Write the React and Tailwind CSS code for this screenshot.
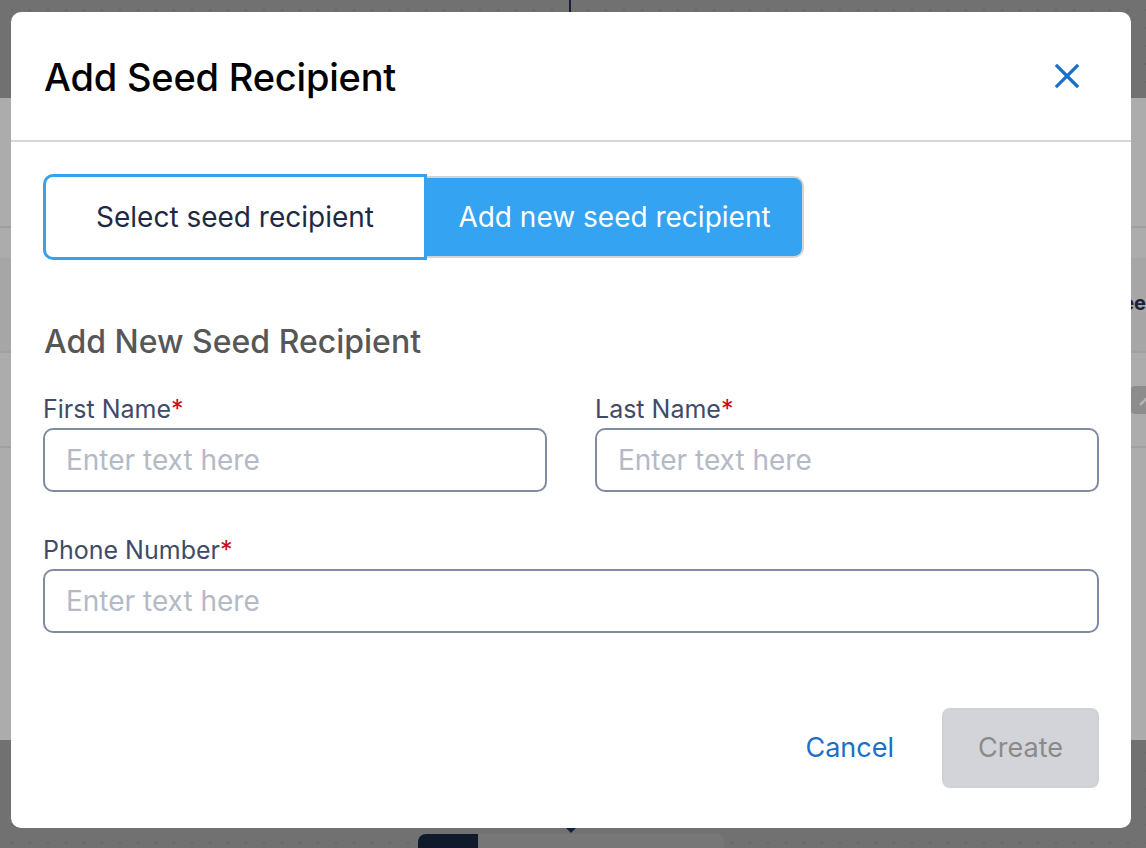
import React from 'react';

const inter = { fontFamily: 'Inter, "Noto Sans", sans-serif' };

function Field({ label, className = '' }) {
  return (
    <div className={`flex flex-col ${className}`}>
      <label className="text-[25px] leading-[30px] text-[#3f4b68]">
        {label}
        <span className="text-[#d0021b]">*</span>
      </label>
      <input
        placeholder="Enter text here"
        className="mt-[4px] h-[64px] w-full rounded-[10px] border-2 border-[#818ba0] bg-white px-[21px] text-[28px] text-[#1e2a44] outline-none placeholder:text-[#b3bac6]"
      />
    </div>
  );
}

export default function App() {
  return (
    <div className="relative h-[848px] w-[1146px] overflow-hidden" style={inter}>
      {/* page behind the overlay */}
      <div className="flex h-full flex-col">
        <div className="h-[98px] bg-[#717171] bg-[radial-gradient(circle,#676767_1.2px,transparent_1.5px)] bg-[size:18px_18px] bg-[position:3px_1px]"></div>
        <div className="flex flex-1 flex-col bg-[#acacac]">
          <div className="h-[130px] border-b-2 border-[#a0a0a0]"></div>
          <div className="h-[30px]"></div>
          <div className="flex h-[95px] items-center justify-end border-b-2 border-[#a0a0a0] bg-[#a6a6a6] pb-[4px]">
            <span className="text-[20px] font-bold leading-none text-[#1a2236]">ee</span>
          </div>
          <div className="flex h-[95px] items-center justify-end border-b-2 border-[#a0a0a0]">
            <div className="mr-[-14px] flex h-[28px] w-[30px] items-center justify-center rounded-[5px] bg-[#8c8c8c]">
              <svg width="14" height="14" viewBox="0 0 14 14" fill="none" stroke="#b4b4b4" strokeWidth="2.5">
                <path d="M2 12L12 2" />
              </svg>
            </div>
          </div>
        </div>
        <div className="relative h-[108px] bg-[#717171] bg-[radial-gradient(circle,#676767_1.2px,transparent_1.5px)] bg-[size:18px_18px] bg-[position:3px_4px]">
          <div className="absolute left-[418px] top-[94px] flex h-[30px] w-[306px] overflow-hidden rounded-t-[8px] bg-[#777777]">
            <div className="w-[60px] bg-[#0f1a2b]"></div>
          </div>
          <svg className="absolute left-[565px] top-[87px]" width="12" height="8" viewBox="0 0 12 8" fill="#15203a">
            <path d="M1 1L6 6L11 1Z" />
          </svg>
        </div>
      </div>
      <div className="absolute left-[569px] top-0 h-[14px] w-[2px] bg-[#15203a]"></div>

      {/* modal */}
      <div className="absolute left-[11px] top-[12px] flex h-[816px] w-[1120px] flex-col rounded-[10px] bg-white">
        <div className="flex h-[130px] items-center justify-between border-b-2 border-[#d6d6d6] pl-[33px] pr-[51px]">
          <h2 className="pt-[2px] text-[38px] font-medium tracking-[-0.2px] text-black">Add Seed Recipient</h2>
          <button className="text-[#1c6fc9]">
            <svg width="26" height="26" viewBox="0 0 26 26" fill="none" stroke="currentColor" strokeWidth="3.2" strokeLinecap="square">
              <path d="M3 3L23 23M23 3L3 23" />
            </svg>
          </button>
        </div>

        <div className="flex flex-1 flex-col px-[32px] pt-[32px]">
          <div className="flex items-center">
            <button className="h-[86px] w-[384px] rounded-l-[10px] border-[3px] border-[#35a2f0] bg-white text-[28px] text-[#1e2a44]">
              Select seed recipient
            </button>
            <button className="h-[82px] w-[377px] rounded-r-[10px] border-2 border-l-0 border-[#d4d4d4] bg-[#33a3f2] text-[28px] text-white">
              Add new seed recipient
            </button>
          </div>

          <h3 className="mt-[62px] pl-[1px] text-[32px] font-medium leading-[40px] text-[#575757]">Add New Seed Recipient</h3>

          <div className="mt-[32px] grid grid-cols-2 gap-x-[48px]">
            <Field label="First Name" />
            <Field label="Last Name" />
          </div>
          <Field label="Phone Number" className="mt-[43px]" />

          <div className="mt-auto mb-[40px] flex items-center justify-end gap-[48px]">
            <button className="text-[27px] text-[#1c6fc9]">Cancel</button>
            <button className="h-[80px] w-[157px] rounded-[8px] border-2 border-[#cfd1d6] bg-[#d2d4d9] text-[27px] text-[#8a8a8a]">
              Create
            </button>
          </div>
        </div>
      </div>
    </div>
  );
}
